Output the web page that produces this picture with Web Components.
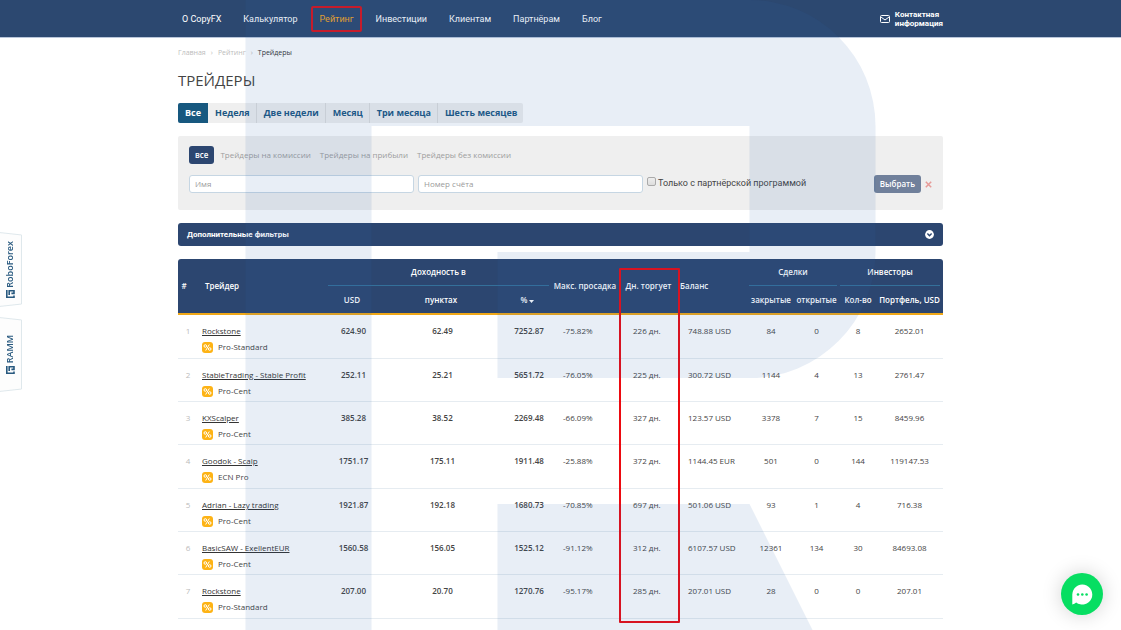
<!DOCTYPE html>
<html lang="ru">
<head>
<meta charset="utf-8">
<title>CopyFX — Трейдеры</title>
<style>
  body { margin: 0; min-height: 100vh; background: #fff; color: #444; font-family: "Open Sans", "Noto Sans", sans-serif; }
</style>
</head>
<body>
<copyfx-page></copyfx-page>

<script>
const define = (name, html, setup) => {
  const template = document.createElement('template');
  template.innerHTML = html;
  customElements.define(name, class extends HTMLElement {
    constructor() {
      super();
      this.attachShadow({ mode: 'open' }).append(template.content.cloneNode(true));
      if (setup) setup(this.shadowRoot, this);
    }
  });
};

/* Top bar with main navigation */
define('site-header', `
<style>
  :host { display: block; background: #2c4870; border-bottom: 1px solid #b9c6da; height: 37px; }
  .inner { width: min(765px, 100% - 32px); height: 100%; margin: 0 auto; display: flex; align-items: center; justify-content: space-between; }
  nav { display: flex; gap: 6px; margin-left: -4px; }
  a { color: #fff; text-decoration: none; }
  nav a { font: 9px/20px Roboto, sans-serif; padding: 1px 6px; border: 2px solid transparent; }
  nav a[aria-current] { color: #f5a623; border-color: #d9141c; border-radius: 2px; }
  .contact { display: flex; align-items: center; gap: 5px; font: bold 8px/9px Roboto, sans-serif; }
</style>
<div class="inner">
  <nav>
    <a href="#">О CopyFX</a><a href="#">Калькулятор</a><a href="#" aria-current="page">Рейтинг</a><a href="#">Инвестиции</a><a href="#">Клиентам</a><a href="#">Партнёрам</a><a href="#">Блог</a>
  </nav>
  <a class="contact" href="#">
    <svg width="10" height="8" viewBox="0 0 10 8" fill="none" stroke="#fff"><rect x=".5" y=".5" width="9" height="7" rx="1"/><path d="M1 2l4 3 4-3"/></svg>
    <span>Контактная<br>информация</span>
  </a>
</div>`);

define('bread-crumbs', `
<style>
  :host { display: block; font: 7px/10px "Open Sans", sans-serif; color: #bcbcbc; }
  nav { display: flex; gap: 5px; }
  a { color: inherit; text-decoration: none; }
  b { font-weight: 400; color: #333; }
</style>
<nav><a href="#">Главная</a><span>›</span><a href="#">Рейтинг</a><span>›</span><b>Трейдеры</b></nav>`);

define('period-tabs', `
<style>
  :host { display: flex; }
  button { font: bold 9px/20px "Open Sans", sans-serif; height: 20px; padding: 0 6px 0 7px; border: 0; border-right: 1px solid #dcdcdc; background: #efefef; color: #1b5783; }
  .active { background: #17587f; color: #fff; border-color: #17587f; border-radius: 2px 0 0 2px; }
  button:last-child { border-right: 0; border-radius: 0 2px 2px 0; }
</style>
<button class="active">Все</button><button>Неделя</button><button>Две недели</button><button>Месяц</button><button>Три месяца</button><button>Шесть месяцев</button>`);

define('trader-filter', `
<style>
  :host { display: block; background: #efefef; border-radius: 2px; padding: 10px 11px 17px; font: 8px/18px "Open Sans", sans-serif; }
  .kinds { display: flex; gap: 9px; }
  .kinds button { font: inherit; padding: 0; border: 0; background: none; color: #9d9d9d; }
  .kinds .active { background: #2c4670; color: #fff; font-weight: 600; padding: 0 6px; border-radius: 3px; margin-right: -3px; }
  form { display: flex; gap: 4px; margin-top: 11px; }
  input[type=text] { box-sizing: border-box; width: 225px; min-width: 60px; height: 18px; border: 1px solid #c6d6e3; border-radius: 3px; padding: 0 5px; font: inherit; background: #fff; }
  input::placeholder { color: #9a9a9a; opacity: 1; }
  label { display: flex; gap: 2px; font: 9px/16px Roboto, sans-serif; color: #444; }
  input[type=checkbox] { appearance: none; width: 9px; height: 9px; margin: 2px 0 0; border: 1px solid #aaa; border-radius: 2px; background: linear-gradient(#eee, #ddd); }
  .end { margin-left: auto; display: flex; align-items: center; gap: 4px; }
  .end button { font: inherit; border: 0; padding: 0; background: none; }
  .end .go { height: 18px; padding: 0 6px; background: #70809b; color: #fff; border-radius: 3px; font-weight: 600; }
  .end svg { display: block; }
</style>
<div class="kinds"><button class="active">все</button><button>Трейдеры на комиссии</button><button>Трейдеры на прибыли</button><button>Трейдеры без комиссии</button></div>
<form>
  <input type="text" placeholder="Имя" aria-label="Имя">
  <input type="text" placeholder="Номер счёта" aria-label="Номер счёта">
  <label><input type="checkbox">Только с партнёрской программой</label>
  <div class="end">
    <button type="button" class="go">Выбрать</button>
    <button type="reset" aria-label="Сбросить"><svg width="7" height="7" viewBox="0 0 7 7" stroke="#e79b98" stroke-width="1.5"><path d="M.8.8l5.4 5.4M6.2.8L.8 6.2"/></svg></button>
  </div>
</form>`);

define('extra-filters', `
<style>
  :host { display: block; }
  button { width: 100%; height: 23px; border: 0; border-radius: 3px; background: #2c4670; color: #fff; padding: 0 9px; display: flex; align-items: center; justify-content: space-between; font: bold 8px/16px Roboto, sans-serif; }
</style>
<button><slot></slot><svg width="9" height="9" viewBox="0 0 9 9"><circle cx="4.5" cy="4.5" r="4.4" fill="#fff"/><path d="M2.4 3.6l2.1 2.1 2.1-2.1" fill="none" stroke="#2c4670" stroke-width="1.4"/></svg></button>`);

const traders = [
  ['Rockstone', 'Pro-Standard', '624.90', '62.49', '7252.87', '-75.82%', '226 дн.', '748.88 USD', '84', '0', '8', '2652.01'],
  ['StableTrading - Stable Profit', 'Pro-Cent', '252.11', '25.21', '5651.72', '-76.05%', '225 дн.', '300.72 USD', '1144', '4', '13', '2761.47'],
  ['KXScalper', 'Pro-Cent', '385.28', '38.52', '2269.48', '-66.09%', '327 дн.', '123.57 USD', '3378', '7', '15', '8459.96'],
  ['Goodok - Scalp', 'ECN Pro', '1751.17', '175.11', '1911.48', '-25.88%', '372 дн.', '1144.45 EUR', '501', '0', '144', '119147.53'],
  ['Adrian - Lazy trading', 'Pro-Cent', '1921.87', '192.18', '1680.73', '-70.85%', '697 дн.', '501.06 USD', '93', '1', '4', '716.38'],
  ['BasicSAW - ExellentEUR', 'Pro-Cent', '1560.58', '156.05', '1525.12', '-91.12%', '312 дн.', '6107.57 USD', '12361', '134', '30', '84693.08'],
  ['Rockstone', 'Pro-Standard', '207.00', '20.70', '1270.76', '-95.17%', '285 дн.', '207.01 USD', '28', '0', '0', '207.01'],
];

define('trader-table', `
<style>
  :host { display: block; position: relative; font: 8px/12px "Open Sans", sans-serif; }
  table { width: 100%; table-layout: fixed; border-collapse: separate; border-spacing: 0; }
  th, td { padding: 0; white-space: nowrap; text-align: center; }
  th { font-weight: 600; color: #fff; background: #2c4670; }
  thead tr { height: 27px; }
  thead tr + tr { height: 29px; }
  thead tr:first-child th:first-child { border-radius: 3px 0 0; }
  thead tr:first-child th:last-child { border-radius: 0 3px 0 0; }
  th[rowspan], thead tr:last-child th { border-bottom: 2px solid #f0a818; }
  .group span { display: block; line-height: 26px; border-bottom: 1px solid #34709a; }
  .group.gap span { margin-right: 3px; }
  th.name { text-align: left; padding-left: 9px; }
  th.num { padding-right: 6px; }
  th.bal { text-align: left; padding-left: 4px; }
  td { vertical-align: top; padding-top: 10px; border-bottom: 1px solid #e6ecf1; height: 32px; }
  tbody tr:nth-child(3n+1) td { height: 33px; }
  td:nth-child(1) { color: #bbb; padding-left: 2px; }
  td:nth-child(2) { text-align: left; padding-left: 6px; }
  td:nth-child(n+3):nth-child(-n+5) { font-weight: 600; padding-left: 3px; }
  td:nth-child(6) { text-align: left; padding-left: 14px; }
  td:nth-child(7), td:nth-child(8) { text-align: left; padding-left: 12px; }
  td a { color: #333; }
  .type { display: flex; align-items: center; gap: 5px; margin-top: 4px; }
  .mark { position: absolute; box-sizing: border-box; left: 441px; width: 61px; top: 9px; height: 355px; border: 2px solid #ec0a10; border-radius: 1px; pointer-events: none; }
</style>
<table>
  <colgroup><col style="width:18px"><col><col style="width:48px"><col style="width:130px"><col style="width:43px"><col style="width:72px"><col style="width:55px"><col style="width:73px"><col style="width:44px"><col style="width:47px"><col style="width:36px"><col style="width:67px"></colgroup>
  <thead>
    <tr><th rowspan="2" class="num">#</th><th rowspan="2" class="name">Трейдер</th><th colspan="3" class="group"><span>Доходность в</span></th><th rowspan="2">Макс. просадка</th><th rowspan="2">Дн. торгует</th><th rowspan="2" class="bal">Баланс</th><th colspan="2" class="group gap"><span>Сделки</span></th><th colspan="2" class="group gap"><span>Инвесторы</span></th></tr>
    <tr><th>USD</th><th>пунктах</th><th>% <svg width="5" height="3" viewBox="0 0 5 3"><path d="M0 0h5L2.5 3z" fill="#fff"/></svg></th><th>закрытые</th><th>открытые</th><th>Кол-во</th><th>Портфель, USD</th></tr>
  </thead>
  <tbody></tbody>
</table>
<div class="mark"></div>`, root => {
  root.querySelector('tbody').innerHTML = traders.map(([name, type, ...cells], i) => `
    <tr><td>${i + 1}</td><td><a href="#">${name}</a><div class="type"><percent-badge></percent-badge><span>${type}</span></div></td>${cells.map(c => `<td>${c}</td>`).join('')}</tr>`).join('');
});

define('percent-badge', `
<style>:host { display: block; width: 11px; height: 11px; } svg { display: block; }</style>
<svg width="11" height="11" viewBox="0 0 11 11"><rect width="11" height="11" rx="3" fill="#fdb315"/><g fill="none" stroke="#fff"><circle cx="3.3" cy="4" r="1.3"/><circle cx="7.7" cy="7" r="1.3"/><path d="M7.3 2.5L3.7 8.5"/></g></svg>`);

/* Vertical tabs at the left edge of the window */
define('side-tab', `
<style>
  :host { display: block; position: relative; width: 22px; color: #28597f; }
  .shape { position: absolute; inset: 0; width: 100%; height: 100%; }
  a { position: relative; height: 100%; display: flex; flex-direction: column; align-items: center; justify-content: center; gap: 3px; padding-right: 2px; color: inherit; text-decoration: none; font: 600 9px/12px "Open Sans", sans-serif; }
  span { writing-mode: vertical-rl; transform: rotate(180deg); }
</style>
<svg class="shape" viewBox="0 0 22 76" preserveAspectRatio="none"><path d="M-1 .5L21.5 3V73L-1 75.5Z" fill="#fdfdfd" stroke="#dfe8ec"/></svg>
<a href="#"><span><slot></slot></span>
<svg width="9" height="8" viewBox="0 0 9 8" fill="none" stroke="#28597f" stroke-width="1.6"><path d="M.8 0V7.2H8V5.4M3.2 5V.8H8V3.4H5.4"/></svg></a>`);

define('chat-button', `
<style>
  :host { display: block; }
  button { display: block; width: 42px; height: 42px; padding: 0; border: 0; border-radius: 50%; background: #07de62; box-shadow: 0 0 20px rgba(0,0,0,.18); }
  svg { display: block; }
</style>
<button aria-label="Чат"><svg width="42" height="42" viewBox="0 0 42 42"><path d="M11.3 31.6V21.5A10 10 0 1 1 15.2 29.5Q13.5 31.2 11.3 31.6Z" fill="#fff"/><g fill="#07de62"><circle cx="17" cy="21.5" r="1.3"/><circle cx="21.3" cy="21.5" r="1.3"/><circle cx="25.6" cy="21.5" r="1.3"/></g></svg></button>`);

/* Translucent letter laid over the whole window */
define('brand-watermark', `
<style>:host { display: block; position: fixed; inset: 0; pointer-events: none; } svg { display: block; width: 100%; height: 100%; }</style>
<svg viewBox="0 0 5 5"><path fill="rgb(50,100,172)" fill-opacity=".11" d="M0 0H4A1 1 0 0 1 5 1V2A1 1 0 0 1 4 3H2V2H4V1H1V5H0ZM2 4H4L4.5 5H2Z"/></svg>`);

define('copyfx-page', `
<style>
  :host { display: block; }
  main { width: min(765px, 100% - 32px); margin: 0 auto; padding: 10px 0; }
  h1 { font: 15px/20px "Open Sans", sans-serif; margin: 12px 0 13px; color: #444; }
  trader-filter { margin-top: 13px; }
  extra-filters { margin: 13px 0; }
  aside { position: fixed; left: 0; top: 232px; display: grid; gap: 10px; }
  side-tab { height: 75px; }
  chat-button { position: fixed; right: 18px; bottom: 15px; }
</style>
<site-header></site-header>
<main>
  <bread-crumbs></bread-crumbs>
  <h1>ТРЕЙДЕРЫ</h1>
  <period-tabs></period-tabs>
  <trader-filter></trader-filter>
  <extra-filters>Дополнительные фильтры</extra-filters>
  <trader-table></trader-table>
</main>
<aside><side-tab>RoboForex</side-tab><side-tab>RAMM</side-tab></aside>
<brand-watermark></brand-watermark>
<chat-button></chat-button>`);
</script>
</body>
</html>
